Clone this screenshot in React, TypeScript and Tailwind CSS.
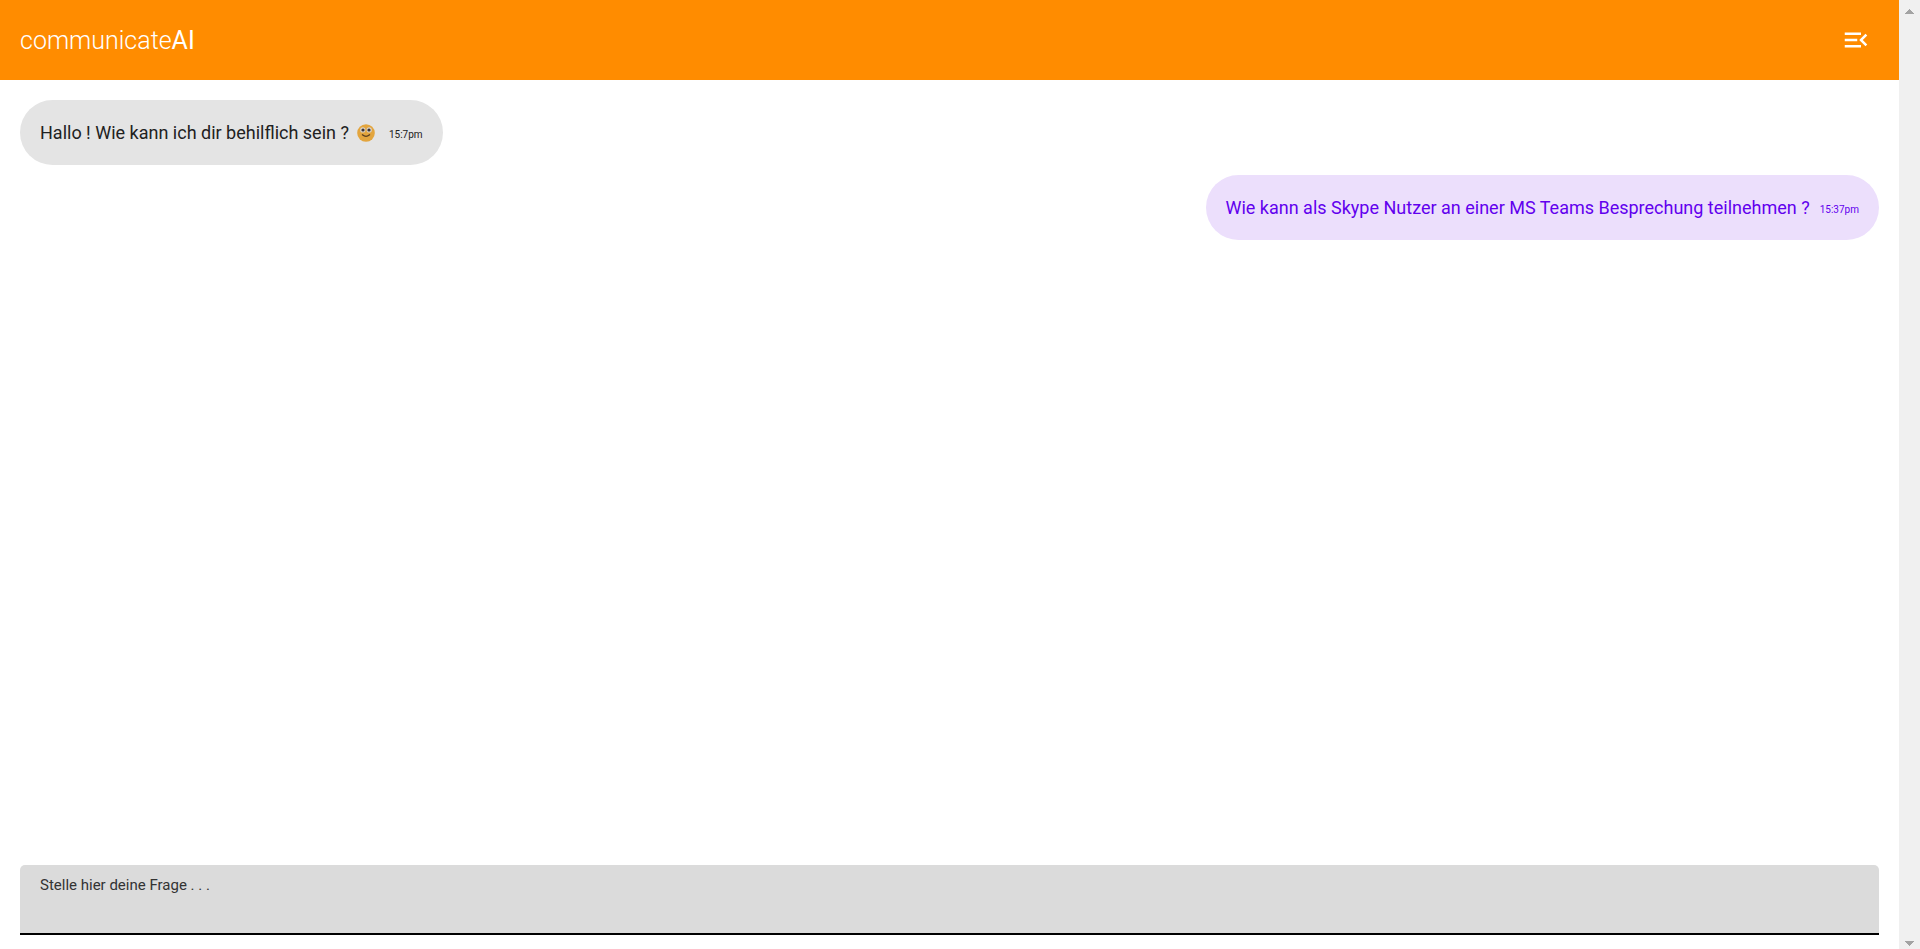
import { MdMenuOpen } from "react-icons/md";

function Smiley() {
  return (
    <svg viewBox="0 0 18 18" className="size-[18px] shrink-0" role="img" aria-label="Smiley">
      <circle cx="9" cy="9" r="8.8" fill="#e3a53e" />
      <circle cx="5.8" cy="5.9" r="2.6" fill="#d9d3cc" />
      <circle cx="12.2" cy="5.9" r="2.6" fill="#d9d3cc" />
      <circle cx="6" cy="6" r="1.6" fill="#3d3434" />
      <circle cx="12" cy="6" r="1.6" fill="#3d3434" />
      <path d="M5.4 10.8Q9 13.8 12.6 10.8" fill="none" stroke="#5b3f1e" strokeWidth="1.3" strokeLinecap="round" />
    </svg>
  );
}

function Scrollbar() {
  return (
    <div aria-hidden="true" className="flex w-[21px] shrink-0 flex-col items-center justify-between bg-[#f0f0f0] pt-[9px] pb-[3px]">
      <svg viewBox="0 0 9 5" className="h-[5px] w-[9px]" shapeRendering="crispEdges">
        <path d="M4.5 0L9 5H0z" fill="#a3a3a3" />
      </svg>
      <svg viewBox="0 0 9 5" className="h-[5px] w-[9px]" shapeRendering="crispEdges">
        <path d="M4.5 5L9 0H0z" fill="#a3a3a3" />
      </svg>
    </div>
  );
}

export default function App() {
  return (
    <div className="flex h-screen bg-white font-['Roboto',sans-serif]">
      <div className="flex min-w-0 flex-1 flex-col">
        <header className="flex h-20 shrink-0 items-center justify-between bg-[#ff8c00] px-5 text-white">
          <h1 className="text-[25px] leading-[33px] font-light">
            communicate<span className="font-normal">AI</span>
          </h1>
          <button type="button" aria-label="Menü" className="flex size-[46px] items-center justify-center">
            <MdMenuOpen className="size-[30px]" />
          </button>
        </header>

        <main className="flex flex-1 flex-col gap-[10px] overflow-hidden p-5">
          <div className="flex h-[65px] items-center gap-[10px] self-start rounded-full bg-[#e4e4e4] px-5 text-[#212121]">
            <p className="flex items-center gap-2 text-lg">
              Hallo ! Wie kann ich dir behilflich sein ? <Smiley />
            </p>
            <time className="pt-1 pl-1 text-[10px]">15:7pm</time>
          </div>
          <div className="flex h-[65px] items-center gap-[10px] self-end rounded-full bg-[#ecdffc] px-5 text-[#6200ee]">
            <p className="text-lg">Wie kann als Skype Nutzer an einer MS Teams Besprechung teilnehmen ?</p>
            <time className="pt-1 text-[10px]">15:37pm</time>
          </div>
        </main>

        <form className="px-5 pb-[14px]">
          <textarea
            aria-label="Frage"
            placeholder="Stelle hier deine Frage . . ."
            className="block h-[70px] w-full resize-none rounded-t-[5px] border-b-2 border-black bg-[#dbdbdb] px-5 py-2 text-[15px] leading-6 text-[#212121] outline-none placeholder:text-[#333333]"
          />
        </form>
      </div>
      <Scrollbar />
    </div>
  );
}
